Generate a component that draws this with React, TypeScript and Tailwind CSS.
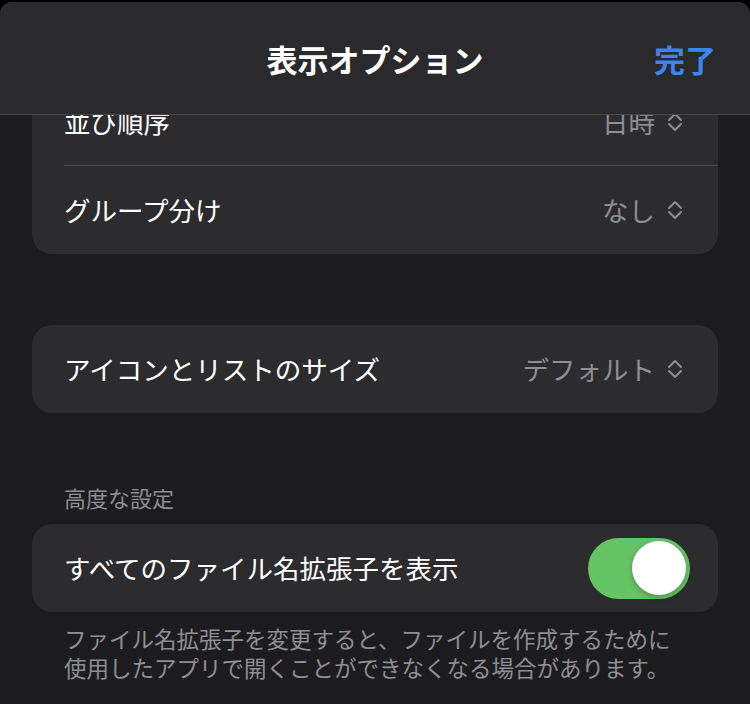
import type { ReactNode } from 'react'

const font = { fontFamily: '"Noto Sans CJK JP", "Noto Sans", sans-serif' }

function UpDown() {
  return (
    <svg width="16" height="20" viewBox="0 0 16 20" fill="none" className="shrink-0">
      <path
        d="M2 8 L8 2 L14 8 M2 12 L8 18 L14 12"
        stroke="#8e8e93"
        strokeWidth="2"
        strokeLinecap="round"
        strokeLinejoin="round"
      />
    </svg>
  )
}

function Row({ label, value, divider }: { label: string; value?: string; divider?: boolean }) {
  return (
    <div className="relative flex h-[88px] items-center justify-between pl-8 pr-[35px]">
      <span className="text-[26.5px] leading-none text-white">{label}</span>
      {value && (
        <div className="flex items-center gap-3">
          <span className="text-[26.5px] leading-none text-[#8e8e93]">{value}</span>
          <UpDown />
        </div>
      )}
      {divider && <div className="absolute bottom-0 left-8 right-0 h-px bg-[#48484a]" />}
    </div>
  )
}

function Card({ children }: { children: ReactNode }) {
  return <div className="mx-8 overflow-hidden rounded-[20px] bg-[#2c2c2e]">{children}</div>
}

function Toggle() {
  return (
    <div className="flex h-[61px] w-[102px] items-center justify-end rounded-full bg-[#65c466] pr-1">
      <div className="h-[54px] w-[54px] rounded-full bg-white shadow-[0_2px_6px_rgba(0,0,0,0.25)]" />
    </div>
  )
}

export default function App() {
  return (
    <div className="h-[704px] w-[750px] overflow-hidden bg-black pt-[2px]" style={font}>
      <div className="relative h-full overflow-hidden rounded-t-[12px] bg-[#1c1c1e]">
        {/* nav bar sits over the scrolled list */}
        <div className="absolute inset-x-0 top-0 z-10 flex h-[113px] items-center justify-center border-b border-[#48484a] bg-[#2a2a2c]">
          <h1 className="text-[31px] font-bold leading-none text-white">表示オプション</h1>
          <button className="absolute right-[34px] text-[31px] font-bold leading-none text-[#3d84f3]">完了</button>
        </div>

        <div className="pt-[76px]">
          <Card>
            <Row label="並び順序" value="日時" divider />
            <Row label="グループ分け" value="なし" />
          </Card>

          <div className="mt-[71px]">
            <Card>
              <Row label="アイコンとリストのサイズ" value="デフォルト" />
            </Card>
          </div>

          <p className="mt-[69px] px-16 text-[22px] leading-[30px] text-[#8e8e93]">高度な設定</p>

          <div className="mt-3">
            <Card>
              <div className="flex h-[88px] items-center justify-between pl-8 pr-7">
                <span className="text-[26.5px] leading-none text-white">すべてのファイル名拡張子を表示</span>
                <Toggle />
              </div>
            </Card>
          </div>

          <p className="mt-3 px-16 text-[22.5px] leading-[29px] text-[#8e8e93]">
            ファイル名拡張子を変更すると、ファイルを作成するために
            <br />
            使用したアプリで開くことができなくなる場合があります。
          </p>
        </div>
      </div>
    </div>
  )
}
